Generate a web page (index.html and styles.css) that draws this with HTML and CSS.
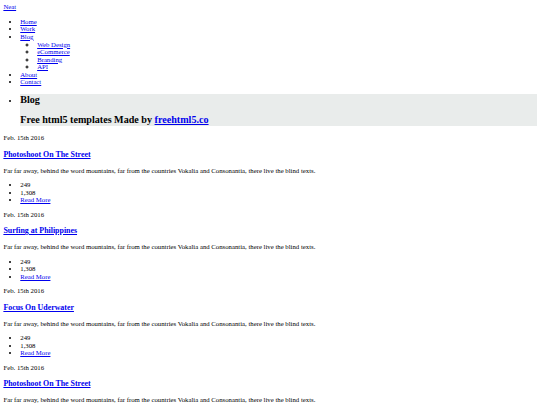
FILE: index.html
```html
<!DOCTYPE html>
<html lang="en">
<head>
    <meta charset="UTF-8">
    <meta name="viewport" content="width=device-width, initial-scale=1.0">
    <title>Neat</title>
    <link rel="stylesheet" href="styles.css">
</head>
<body>
    <div class="logo"><a href="#">Neat</a></div>
    <ul class="menu">
        <li><a href="#">Home</a></li>
        <li><a href="#">Work</a></li>
        <li><a href="#">Blog</a>
            <ul>
                <li><a href="#">Web Design</a></li>
                <li><a href="#">eCommerce</a></li>
                <li><a href="#">Branding</a></li>
                <li><a href="#">API</a></li>
            </ul>
        </li>
        <li><a href="#">About</a></li>
        <li><a href="#">Contact</a></li>
    </ul>
    <ul class="hero">
        <li class="slide">
            <h2>Blog</h2>
            <h2>Free html5 templates Made by <a href="#">freehtml5.co</a></h2>
        </li>
    </ul>
    <div class="post">
        <p class="date">Feb. 15th 2016</p>
        <h3><a href="#">Photoshoot On The Street</a></h3>
        <p>Far far away, behind the word mountains, far from the countries Vokalia and Consonantia, there live the blind texts.</p>
        <ul class="meta">
            <li>249</li>
            <li>1,308</li>
            <li><a href="#">Read More</a></li>
        </ul>
    </div>
    <div class="post">
        <p class="date">Feb. 15th 2016</p>
        <h3><a href="#">Surfing at Philippines</a></h3>
        <p>Far far away, behind the word mountains, far from the countries Vokalia and Consonantia, there live the blind texts.</p>
        <ul class="meta">
            <li>249</li>
            <li>1,308</li>
            <li><a href="#">Read More</a></li>
        </ul>
    </div>
    <div class="post">
        <p class="date">Feb. 15th 2016</p>
        <h3><a href="#">Focus On Uderwater</a></h3>
        <p>Far far away, behind the word mountains, far from the countries Vokalia and Consonantia, there live the blind texts.</p>
        <ul class="meta">
            <li>249</li>
            <li>1,308</li>
            <li><a href="#">Read More</a></li>
        </ul>
    </div>
    <div class="post">
        <p class="date">Feb. 15th 2016</p>
        <h3><a href="#">Photoshoot On The Street</a></h3>
        <p>Far far away, behind the word mountains, far from the countries Vokalia and Consonantia, there live the blind texts.</p>
        <ul class="meta">
            <li>249</li>
            <li>1,308</li>
            <li><a href="#">Read More</a></li>
        </ul>
    </div>
</body>
</html>
```

FILE: styles.css
```css
body {
    margin: 3.375px;
    font-family: "Liberation Serif", "Times New Roman", serif;
    font-size: 6.75px;
    line-height: 7.594px;
    color: #000;
}

a {
    color: #0000ee;
}

p {
    margin: 6.75px 0;
}

ul {
    margin: 6.75px 0;
    padding-left: 16.875px;
}

ul ul {
    margin: 0;
}

h2 {
    font-size: 10.125px;
    line-height: 11.39px;
    margin: 8.4px 0;
}

h3 {
    font-size: 7.9px;
    line-height: 9.28px;
    margin: 7.9px 0;
}

.slide {
    background-color: #e9eceb;
}
```
